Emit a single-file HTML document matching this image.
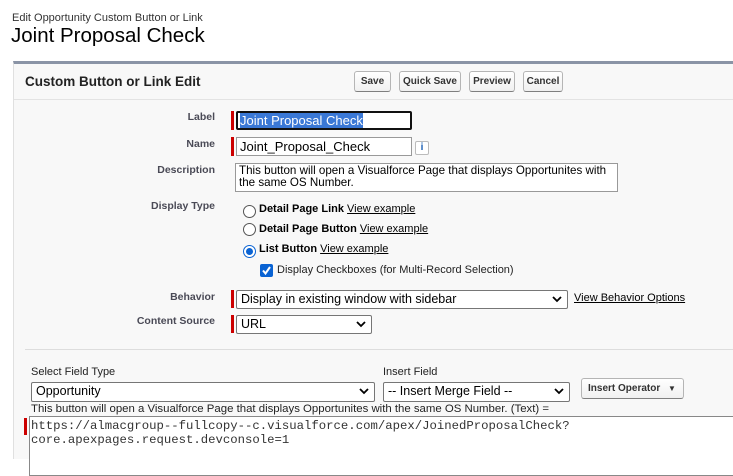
<!DOCTYPE html>
<html><head><style>
*{box-sizing:border-box;margin:0;padding:0}
body{width:733px;height:459px;overflow:hidden;background:#fff;font-family:"Liberation Sans",Arial,sans-serif;position:relative;color:#000}
.a{position:absolute;white-space:nowrap}
.lbl{position:absolute;right:518px;font-size:10.5px;font-weight:bold;color:#4a4a56;text-align:right}
.inp{position:absolute;background:#fff;border:1px solid #999;font-size:12.5px;padding:2px 3px;white-space:nowrap}
.req{position:absolute;width:3px;background:#c00;}
.btn{position:absolute;border:1px solid #b5b5b5;border-bottom-color:#7f7f7f;border-radius:3px;background:linear-gradient(#fff,#f0f0f0);font-size:10px;font-weight:bold;color:#333;text-align:center;line-height:19px}
.radio{position:absolute;width:13px;height:13px;border:1px solid #555;border-radius:50%;background:#fff}
.t{position:absolute;font-size:11px;white-space:nowrap}
u{color:#000}
.sel{position:absolute;background:#fff;border:1px solid #767676;border-radius:2px;font-size:12.5px;padding:1px 4px;white-space:nowrap}
.chev{position:absolute;right:5px;top:4px}
</style></head><body>
<div class="a" style="left:12px;top:12px;font-size:11px;color:#333">Edit Opportunity Custom Button or Link</div>
<div class="a" style="left:11px;top:24px;font-size:20.5px;color:#000">Joint Proposal Check</div>

<div class="a" style="left:13px;top:61px;width:720px;height:398px;background:#f8f8f8;border-top:3px solid #8a94a6;border-left:1px solid #e0e0e0"></div>
<div class="a" style="left:25px;top:74px;font-size:13.5px;font-weight:bold;color:#222">Custom Button or Link Edit</div>
<div class="btn" style="left:354px;top:71px;width:37px;height:21px">Save</div>
<div class="btn" style="left:399px;top:71px;width:62px;height:21px">Quick Save</div>
<div class="btn" style="left:469px;top:71px;width:46px;height:21px">Preview</div>
<div class="btn" style="left:523px;top:71px;width:40px;height:21px">Cancel</div>
<div class="a" style="left:14px;top:99px;width:719px;height:1px;background:#e3e3e3"></div>

<div class="lbl" style="top:111px">Label</div>
<div class="req" style="left:231px;top:111px;height:19px"></div>
<div class="inp" style="left:236px;top:111px;width:176px;height:19px;border:2px solid #111;border-radius:2px;padding:0 2px;line-height:15px;font-size:13px"><span style="background:#3a78d6;color:#fff">Joint Proposal Check</span></div>

<div class="lbl" style="top:138px">Name</div>
<div class="req" style="left:231px;top:137px;height:19px"></div>
<div class="inp" style="left:236px;top:137px;width:176px;height:19px;line-height:13px;font-size:13px">Joint_Proposal_Check</div>
<div class="a" style="left:415px;top:141px;width:14px;height:14px;border:1px solid #bbb;background:#fff;border-radius:2px;font-size:10px;color:#1a5fb4;text-align:center;line-height:12px;font-weight:bold">i</div>

<div class="lbl" style="top:164px">Description</div>
<div class="inp" style="left:235px;top:163px;width:383px;height:29px;font-size:11.6px;line-height:12px;padding:1px 3px;white-space:normal">This button will open a Visualforce Page that displays Opportunites with the same OS Number.</div>

<div class="lbl" style="top:200px">Display Type</div>
<div class="radio" style="left:243px;top:205px"></div>
<div class="t" style="left:259px;top:203px"><b>Detail Page Link</b> <u>View example</u></div>
<div class="radio" style="left:243px;top:223px"></div>
<div class="t" style="left:259px;top:223px"><b>Detail Page Button</b> <u>View example</u></div>
<div class="radio" style="left:243px;top:245px;border:1px solid #0a63d3"><div style="position:absolute;left:2px;top:2px;width:7px;height:7px;border-radius:50%;background:#0a63d3"></div></div>
<div class="t" style="left:259px;top:243px"><b>List Button</b> <u>View example</u></div>
<div class="a" style="left:260px;top:264px;width:13px;height:13px;background:#0a63d3;border-radius:2px"><svg width="13" height="13" style="position:absolute;left:0;top:0"><path d="M3 6.5 L5.5 9.5 L10 3" stroke="#fff" stroke-width="2" fill="none"/></svg></div>
<div class="t" style="left:277px;top:264px;color:#222">Display Checkboxes (for Multi-Record Selection)</div>

<div class="lbl" style="top:291px">Behavior</div>
<div class="req" style="left:231px;top:290px;height:18px"></div>
<div class="sel" style="left:236px;top:290px;width:332px;height:19px">Display in existing window with sidebar<svg class="chev" width="10" height="8"><path d="M1 2 L5 6 L9 2" stroke="#000" stroke-width="1.8" fill="none"/></svg></div>
<div class="t" style="left:574px;top:292px"><u>View Behavior Options</u></div>

<div class="lbl" style="top:315px">Content Source</div>
<div class="req" style="left:231px;top:315px;height:18px"></div>
<div class="sel" style="left:236px;top:315px;width:136px;height:19px">URL<svg class="chev" width="10" height="8"><path d="M1 2 L5 6 L9 2" stroke="#000" stroke-width="1.8" fill="none"/></svg></div>

<div class="a" style="left:25px;top:349px;width:708px;height:1px;background:#ddd"></div>

<div class="t" style="left:31px;top:366px;color:#222">Select Field Type</div>
<div class="sel" style="left:31px;top:382px;width:344px;height:20px">Opportunity<svg class="chev" width="10" height="8"><path d="M1 2 L5 6 L9 2" stroke="#000" stroke-width="1.8" fill="none"/></svg></div>
<div class="t" style="left:383px;top:366px;color:#222">Insert Field</div>
<div class="sel" style="left:383px;top:382px;width:187px;height:20px">-- Insert Merge Field --<svg class="chev" width="10" height="8"><path d="M1 2 L5 6 L9 2" stroke="#000" stroke-width="1.8" fill="none"/></svg></div>
<div class="btn" style="left:581px;top:378px;width:103px;height:21px;text-align:left;padding-left:6px">Insert Operator <span style="font-size:8px;margin-left:5px">▼</span></div>

<div class="t" style="left:31px;top:403px;font-size:11.4px;color:#222">This button will open a Visualforce Page that displays Opportunites with the same OS Number. (Text) =</div>
<div class="req" style="left:24px;top:418px;height:17px"></div>
<div class="a" style="left:29px;top:416px;width:710px;height:60px;background:#fff;border:1px solid #888;font-family:'Liberation Mono',monospace;font-size:12.3px;line-height:14px;padding:2px 1px;color:#333">https://almacgroup--fullcopy--c.visualforce.com/apex/JoinedProposalCheck?<br>core.apexpages.request.devconsole=1</div>
</body></html>
